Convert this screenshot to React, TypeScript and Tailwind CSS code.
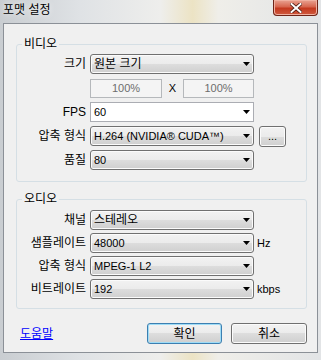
import React from 'react';

const font = "font-['Liberation_Sans','Noto_Sans_CJK_KR',sans-serif]";

function Arrow() {
  return (
    <svg width="7" height="4" viewBox="0 0 7 4" className="ml-auto mr-[3px] shrink-0">
      <polygon points="0,0 7,0 3.5,4" fill="#000" />
    </svg>
  );
}

function Combo({ value, editable = false, small = false }: { value: string; editable?: boolean; small?: boolean }) {
  return (
    <div
      className={
        editable
          ? 'flex h-[20px] w-[164px] items-center border border-[#abadb3] bg-white'
          : 'flex h-[20px] w-[164px] items-center rounded-[3px] border border-[#707070] bg-[linear-gradient(#f2f2f2_0%,#ebebeb_50%,#dddddd_50%,#cfcfcf_100%)] shadow-[inset_0_0_0_1px_#fbfbfb]'
      }
    >
      <span className={(small ? 'text-[11px] ' : 'text-[12px] ') + 'pl-[3px] leading-none text-black whitespace-nowrap'}>{value}</span>
      <Arrow />
    </div>
  );
}

function Row({ label, children, gap = 'ml-[4px]' }: { label: string; children: React.ReactNode; gap?: string }) {
  return (
    <div className="flex h-[20px] items-center">
      <div className="w-[69px] text-right text-[12px] leading-none">{label}</div>
      <div className={'flex items-center ' + gap}>{children}</div>
    </div>
  );
}

function Button({ children, primary = false, className = '' }: { children: React.ReactNode; primary?: boolean; className?: string }) {
  return (
    <button
      className={
        'flex h-[21px] items-center justify-center rounded-[3px] border bg-[linear-gradient(#f2f2f2_0%,#ebebeb_50%,#dddddd_50%,#cfcfcf_100%)] text-[12px] leading-none ' +
        (primary ? 'border-[#3c7fb1] shadow-[inset_0_0_0_1px_#9fdcf6]' : 'border-[#707070] shadow-[inset_0_0_0_1px_#fbfbfb]') +
        ' ' + className
      }
    >
      {children}
    </button>
  );
}

export default function App() {
  return (
    <div className={font + ' relative h-[360px] w-[321px] overflow-hidden bg-[linear-gradient(90deg,#c9cdd1_0%,#dfe2e5_25%,#eeeeec_50%,#ece3c4_60%,#efeee9_68%,#e2e4e6_100%)] text-black'}>
      {/* Title bar */}
      <div className="flex h-[23px] items-start">
        <div className="pl-[3px] pt-[3px] text-[12px] leading-[15px] text-black [text-shadow:0_0_6px_#fff]">포맷 설정</div>
        <div className="ml-auto mr-[3px] flex h-[16px] w-[45px] items-center justify-center rounded-b-[4px] border border-t-0 border-[#6e2418] bg-[linear-gradient(#e9a392_0%,#d7664f_45%,#c4391f_55%,#cf5a3f_100%)] shadow-[inset_0_0_0_1px_#f0b0a0]">
          <svg width="12" height="10" viewBox="0 0 12 10">
            <path d="M1.5 1 L10.5 9 M10.5 1 L1.5 9" stroke="#4a1a12" strokeWidth="3.6" strokeLinecap="square" />
            <path d="M1.5 1 L10.5 9 M10.5 1 L1.5 9" stroke="#ffffff" strokeWidth="2" strokeLinecap="square" />
          </svg>
        </div>
      </div>

      {/* Client area */}
      <div className="ml-[3px] flex h-[330px] w-[315px] flex-col border border-[#8b9097] bg-[#f0f0f0] pl-[12px] pr-[10px]">
        <fieldset className="mt-[13px] rounded-[3px] border border-[#d5dfe5] pb-[11px] pt-[3px]">
          <legend className="ml-[5px] px-[2px] text-[12px] leading-[14px]">비디오</legend>
          <div className="flex flex-col gap-[4px]">
            <Row label="크기">
              <Combo value="원본 크기" />
            </Row>
            <Row label="">
              <div className="flex h-[19px] w-[72px] items-center justify-center border border-[#b5b8bb] bg-[#f4f4f4] text-[11px] leading-none text-[#6d6d6d]">100%</div>
              <div className="w-[21px] text-center text-[11px] leading-none">X</div>
              <div className="flex h-[19px] w-[71px] items-center justify-center border border-[#b5b8bb] bg-[#f4f4f4] text-[11px] leading-none text-[#6d6d6d]">100%</div>
            </Row>
            <Row label="FPS">
              <Combo value="60" editable small />
            </Row>
            <Row label="압축 형식">
              <Combo value="H.264 (NVIDIA® CUDA™)" small />
              <Button className="ml-[5px] h-[18px] w-[27px]">
                <span className="text-[11px]">...</span>
              </Button>
            </Row>
            <Row label="품질">
              <Combo value="80" small />
            </Row>
          </div>
        </fieldset>

        <fieldset className="mt-[10px] rounded-[3px] border border-[#d5dfe5] pb-[9px] pt-[4px]">
          <legend className="ml-[5px] px-[2px] text-[12px] leading-[14px]">오디오</legend>
          <div className="flex flex-col gap-[3px]">
            <Row label="채널">
              <Combo value="스테레오" />
            </Row>
            <Row label="샘플레이트">
              <Combo value="48000" small />
              <span className="ml-[3px] text-[11px] leading-none">Hz</span>
            </Row>
            <Row label="압축 형식">
              <Combo value="MPEG-1 L2" small />
            </Row>
            <Row label="비트레이트">
              <Combo value="192" small />
              <span className="ml-[3px] text-[11px] leading-none">kbps</span>
            </Row>
          </div>
        </fieldset>

        <div className="mt-[14px] flex items-center">
          <a className="ml-[4px] text-[12px] leading-none text-[#0000ff] underline">도움말</a>
          <div className="ml-auto flex gap-[9px]">
            <Button primary className="w-[75px]">확인</Button>
            <Button className="w-[76px]">취소</Button>
          </div>
        </div>
      </div>
    </div>
  );
}
